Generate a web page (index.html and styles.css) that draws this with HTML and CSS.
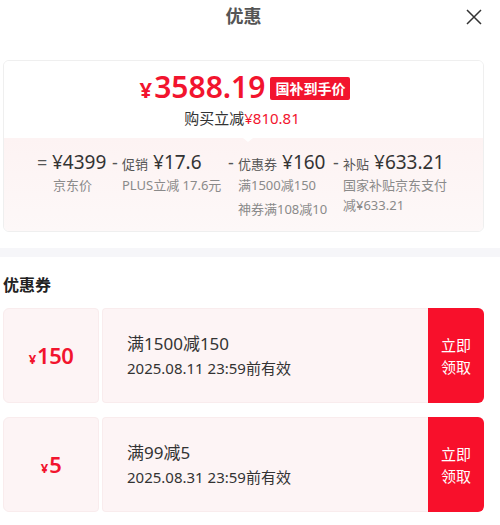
FILE: index.html
```html
<!DOCTYPE html>
<html lang="zh-CN">
<head>
<meta charset="utf-8">
<link rel="stylesheet" href="styles.css">
</head>
<body>
<div class="page">
  <header class="head">
    <h1 class="title">优惠</h1>
    <span class="close">
      <svg width="16" height="16" viewBox="0 0 16 16"><path d="M1 1L15 15M15 1L1 15" stroke="#333" stroke-width="1.5" fill="none"/></svg>
    </span>
  </header>

  <section class="card">
    <div class="card-top">
      <div class="price-line">
        <span class="price"><span class="yen">¥</span>3588.19</span>
        <span class="badge">国补到手价</span>
      </div>
      <div class="save">购买立减<span class="red">¥810.81</span></div>
    </div>
    <div class="card-bottom">
      <div class="col c1">
        <span class="op op-eq">=</span>
        <div class="col-body">
          <div class="main"><span class="amt">¥4399</span></div>
          <div class="sub">京东价</div>
        </div>
      </div>
      <div class="col c2">
        <span class="op">-</span>
        <div class="col-body">
          <div class="main"><span class="lab">促销</span><span class="amt">¥17.6</span></div>
          <div class="sub">PLUS立减 17.6元</div>
        </div>
      </div>
      <div class="col c3">
        <span class="op">-</span>
        <div class="col-body">
          <div class="main"><span class="lab">优惠券</span><span class="amt">¥160</span></div>
          <div class="sub">满1500减150</div>
          <div class="sub sub2">神券满108减10</div>
        </div>
      </div>
      <div class="col c4">
        <span class="op">-</span>
        <div class="col-body">
          <div class="main"><span class="lab">补贴</span><span class="amt">¥633.21</span></div>
          <div class="sub wrap">国家补贴京东支付减¥633.21</div>
        </div>
      </div>
    </div>
  </section>
</div>

<div class="band"></div>

<div class="page">
  <h2 class="sec-title">优惠券</h2>
  <div class="coupon">
    <div class="c-left"><span class="c-yen">¥</span><span class="c-val">150</span></div>
    <div class="c-mid">
      <div class="c-name">满1500减150</div>
      <div class="c-date">2025.08.11 23:59前有效</div>
    </div>
    <div class="c-btn">立即<br>领取</div>
  </div>
  <div class="coupon">
    <div class="c-left"><span class="c-yen">¥</span><span class="c-val">5</span></div>
    <div class="c-mid">
      <div class="c-name">满99减5</div>
      <div class="c-date">2025.08.31 23:59前有效</div>
    </div>
    <div class="c-btn">立即<br>领取</div>
  </div>
</div>
</body>
</html>
```

FILE: styles.css
```css
* { box-sizing: border-box; }
html, body { margin: 0; padding: 0; background: #fff; }
body {
  font-family: "Noto Sans", "Noto Sans CJK SC", sans-serif;
  color: #333;
  width: 500px;
}
.page { padding: 0 16px 0 3px; }

.head {
  height: 60px;
  display: flex;
  justify-content: center;
  position: relative;
}
.title {
  margin: 4px 0 0 0;
  font-size: 18px;
  line-height: 24px;
  font-weight: 700;
  color: #555;
}
.close {
  position: absolute;
  right: 2px;
  top: 9px;
  width: 16px;
  height: 16px;
}
.close svg { display: block; }

.card {
  border: 1px solid #efefef;
  border-radius: 6px;
  overflow: hidden;
  height: 172px;
  display: flex;
  flex-direction: column;
}
.card-top {
  height: 77px;
  display: flex;
  flex-direction: column;
  align-items: center;
  position: relative;
  background: #fff;
}
.card-top::after {
  content: "";
  position: absolute;
  left: 239px;
  bottom: -4px;
  border-left: 5px solid transparent;
  border-right: 5px solid transparent;
  border-top: 4px solid #fff;
  z-index: 2;
}
.price-line {
  display: flex;
  align-items: center;
  margin-top: 12px;
  height: 30px;
  margin-left: 3px;
}
.price {
  color: #f2142e;
  font-size: 30px;
  line-height: 30px;
  font-weight: 600;
  letter-spacing: 0;
}
.yen { font-size: 22px; margin-right: 2px; font-weight: 700; }
.badge {
  margin-left: 5px;
  background: #f2142e;
  color: #fff;
  font-weight: 700;
  font-size: 14px;
  line-height: 23px;
  height: 23px;
  padding: 0 5px;
  border-radius: 2px;
}
.save {
  font-size: 15px;
  line-height: 20px;
  margin-top: 5px;
  margin-left: -3px;
  color: #333;
}
.red { color: #f2142e; }

.card-bottom {
  flex: 1;
  background: linear-gradient(180deg, #fdf3f3 0%, #fdf8f8 100%);
  display: grid;
  grid-template-columns: 75px 116px 105px 1fr;
  padding: 12px 0 0 33px;
}
.col { display: flex; align-items: flex-start; }
.op {
  width: 10px;
  font-size: 18px;
  line-height: 24px;
  color: #555;
  flex: none;
}
.op-eq { width: 15px; }
.main {
  display: flex;
  align-items: baseline;
  white-space: nowrap;
  height: 24px;
}
.lab { font-size: 13px; color: #555; margin-right: 5px; }
.amt { font-size: 19px; line-height: 24px; color: #333; }
.sub {
  font-size: 13px;
  line-height: 18px;
  color: #8a8a8a;
  margin-top: 2px;
  white-space: nowrap;
}
.c1 .sub { margin-left: 1px; }
.sub2 { margin-top: 6px; }
.sub.wrap { white-space: normal; width: 105px; line-height: 20px; margin-top: 1px; }

.band {
  height: 9px;
  background: #f6f6f9;
  margin-top: 16px;
}

.sec-title {
  margin: 17px 0 0;
  font-size: 16px;
  line-height: 22px;
  font-weight: 700;
  color: #222;
}
.coupon {
  display: flex;
  height: 95px;
  margin-top: 14px;
}
.sec-title + .coupon { margin-top: 12px; }
.c-left {
  width: 96px;
  background: #fdf4f5;
  border: 1px solid #f9eced;
  border-radius: 6px 4px 4px 6px;
  display: flex;
  align-items: baseline;
  justify-content: center;
  padding-top: 31px;
  color: #f2142e;
}
.c-yen { font-size: 13px; font-weight: 700; margin-right: 1px; }
.c-val { font-size: 22px; line-height: 30px; font-weight: 600; letter-spacing: -0.5px; }
.c-mid {
  flex: 1;
  margin-left: 3px;
  background: #fdf4f5;
  border: 1px solid #f9eced;
  border-right: none;
  border-radius: 4px 0 0 4px;
  padding: 23px 0 0 24px;
}
.c-name { font-size: 17px; line-height: 24px; color: #333; }
.c-date { font-size: 15px; line-height: 22px; color: #333; margin-top: 1px; }
.c-btn {
  width: 56px;
  background: #f8102b;
  color: #fff;
  border-radius: 0 6px 6px 0;
  display: flex;
  align-items: center;
  justify-content: center;
  text-align: center;
  font-size: 15px;
  line-height: 22px;
}
```
